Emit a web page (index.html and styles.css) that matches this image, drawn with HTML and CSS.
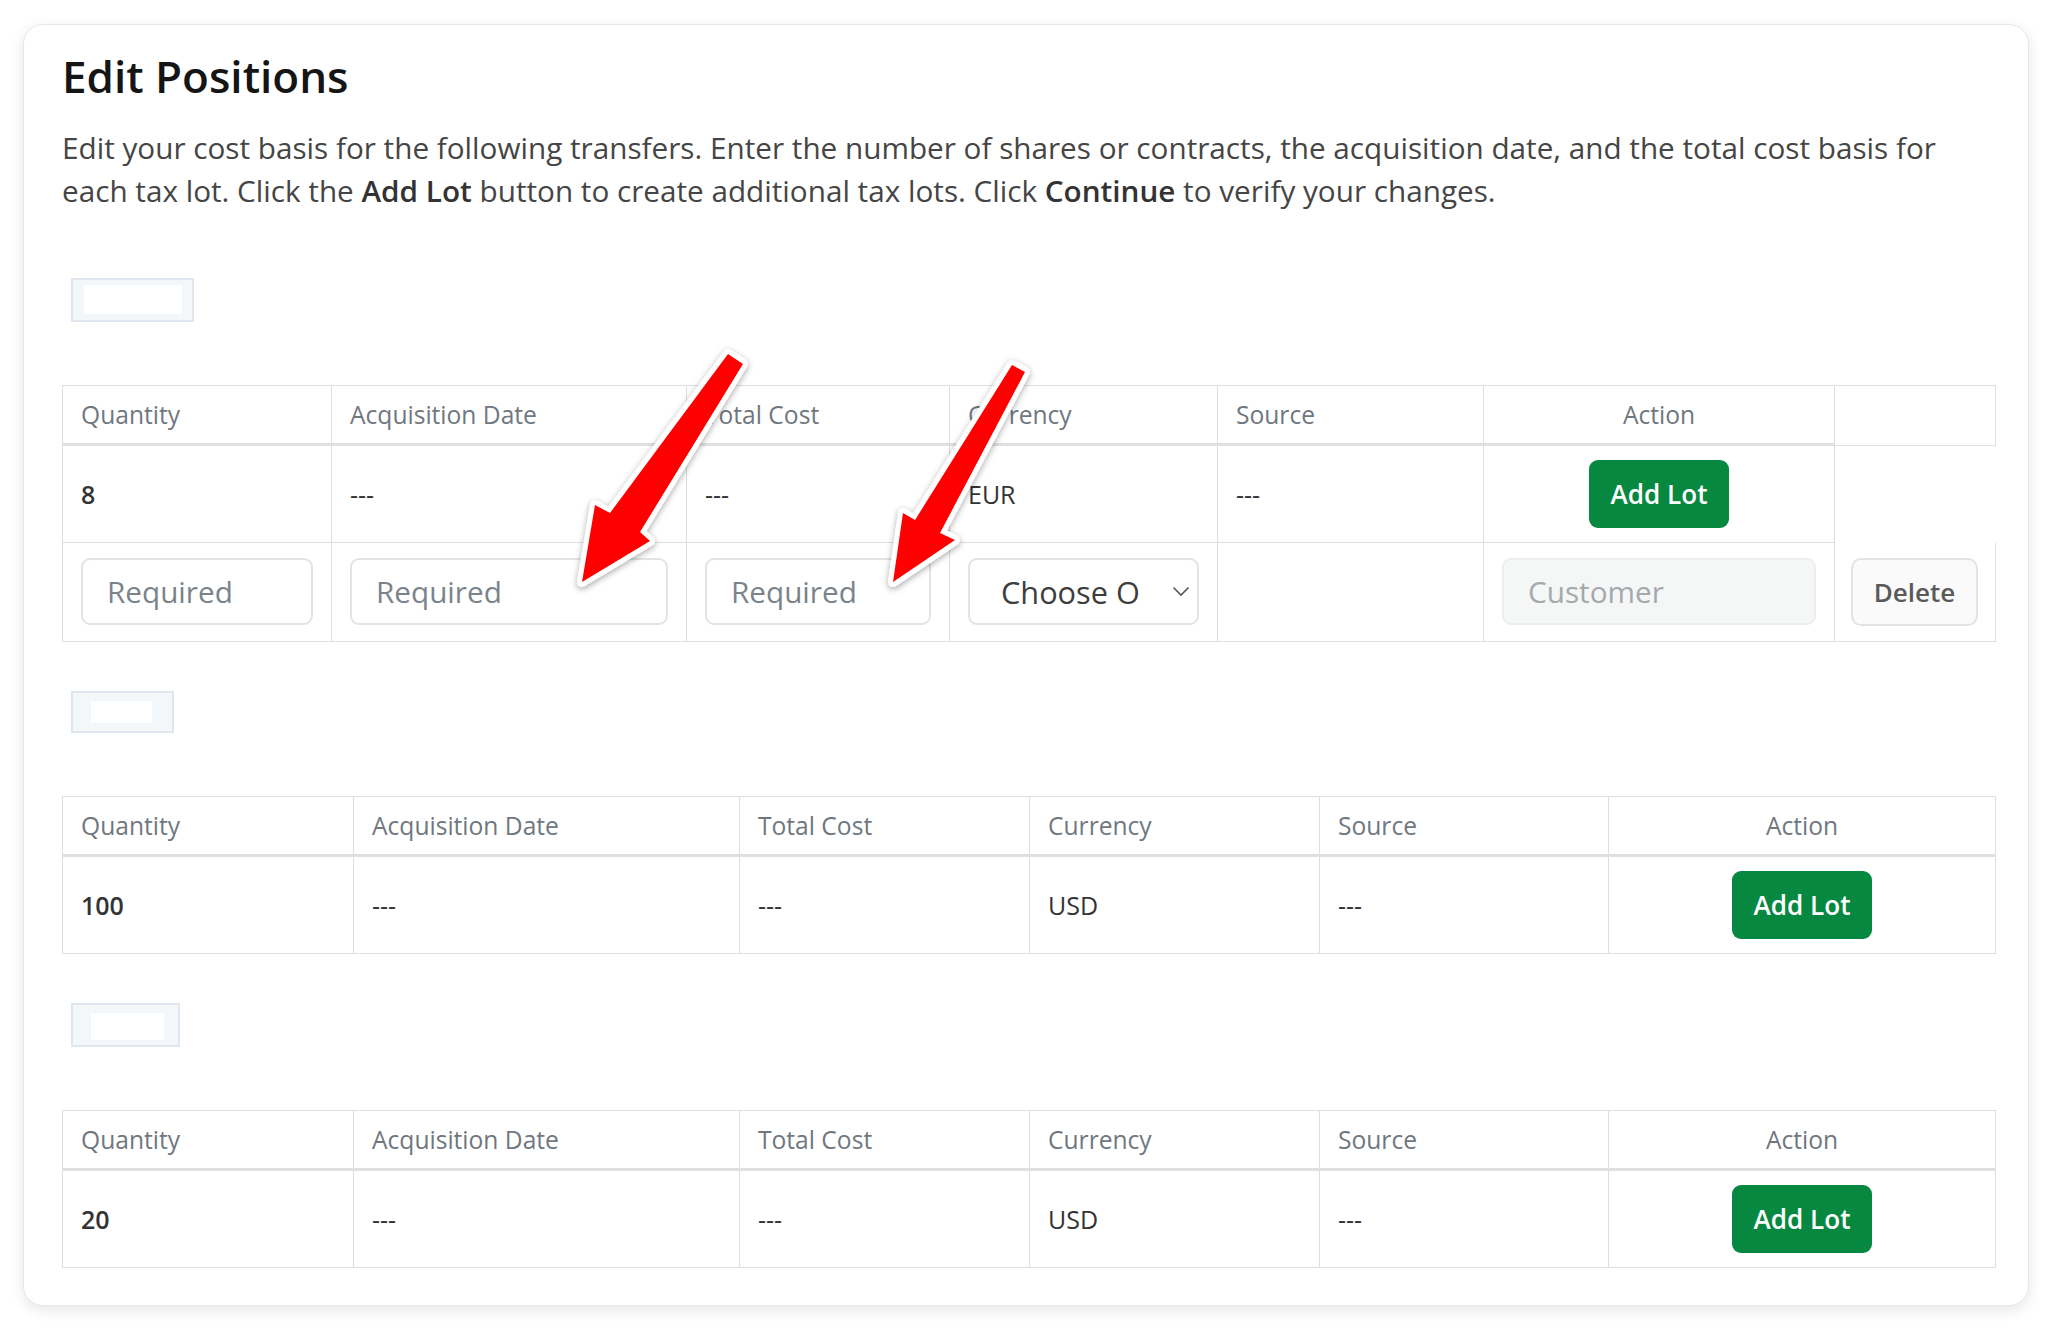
FILE: index.html
```html
<!DOCTYPE html>
<html lang="en">
<head>
<meta charset="utf-8">
<title>Edit Positions</title>
<link rel="stylesheet" href="styles.css">
</head>
<body>
<div class="page">
  <div class="card">
    <h1 class="title">Edit Positions</h1>
    <p class="intro">Edit your cost basis for the following transfers. Enter the number of shares or contracts, the acquisition date, and the total cost basis for each tax lot. Click the <b>Add Lot</b> button to create additional tax lots. Click <b>Continue</b> to verify your changes.</p>

    <section class="position position-first">
      <div class="logo logo-a"><span class="logo-inner"></span></div>
      <table class="lots lots-a">
        <colgroup>
          <col class="ca1"><col class="ca2"><col class="ca3"><col class="ca4"><col class="ca5"><col class="ca6"><col class="ca7">
        </colgroup>
        <thead>
          <tr>
            <th>Quantity</th>
            <th>Acquisition Date</th>
            <th>Total Cost</th>
            <th>Currency</th>
            <th>Source</th>
            <th class="action">Action</th>
            <th class="spacer" rowspan="2"></th>
          </tr>
        </thead>
        <tbody>
          <tr>
            <td class="num">8</td>
            <td>---</td>
            <td>---</td>
            <td>EUR</td>
            <td>---</td>
            <td class="action"><button class="btn-add" type="button">Add Lot</button></td>
          </tr>
          <tr class="edit-row">
            <td><input class="field" type="text" placeholder="Required"></td>
            <td><input class="field" type="text" placeholder="Required"></td>
            <td><input class="field" type="text" placeholder="Required"></td>
            <td>
              <div class="select"><span class="select-text">Choose One</span>
                <svg class="chev" width="18" height="11" viewBox="0 0 18 11"><path d="M1.5 1.5 L9 9 L16.5 1.5" fill="none" stroke="#555" stroke-width="1.6"/></svg>
              </div>
            </td>
            <td></td>
            <td><input class="field field-disabled" type="text" placeholder="Customer" disabled></td>
            <td class="del-cell"><button class="btn-delete" type="button">Delete</button></td>
          </tr>
        </tbody>
      </table>
    </section>

    <section class="position">
      <div class="logo logo-b"><span class="logo-inner"></span></div>
      <table class="lots lots-b">
        <colgroup>
          <col class="cb1"><col class="cb2"><col class="cb3"><col class="cb4"><col class="cb5"><col class="cb6">
        </colgroup>
        <thead>
          <tr>
            <th>Quantity</th>
            <th>Acquisition Date</th>
            <th>Total Cost</th>
            <th>Currency</th>
            <th>Source</th>
            <th class="action">Action</th>
          </tr>
        </thead>
        <tbody>
          <tr>
            <td class="num">100</td>
            <td>---</td>
            <td>---</td>
            <td>USD</td>
            <td>---</td>
            <td class="action"><button class="btn-add" type="button">Add Lot</button></td>
          </tr>
        </tbody>
      </table>
    </section>

    <section class="position">
      <div class="logo logo-c"><span class="logo-inner"></span></div>
      <table class="lots lots-b">
        <colgroup>
          <col class="cb1"><col class="cb2"><col class="cb3"><col class="cb4"><col class="cb5"><col class="cb6">
        </colgroup>
        <thead>
          <tr>
            <th>Quantity</th>
            <th>Acquisition Date</th>
            <th>Total Cost</th>
            <th>Currency</th>
            <th>Source</th>
            <th class="action">Action</th>
          </tr>
        </thead>
        <tbody>
          <tr>
            <td class="num">20</td>
            <td>---</td>
            <td>---</td>
            <td>USD</td>
            <td>---</td>
            <td class="action"><button class="btn-add" type="button">Add Lot</button></td>
          </tr>
        </tbody>
      </table>
    </section>
  </div>

  <svg class="arrows" width="2052" height="1330" viewBox="0 0 2052 1330">
    <defs>
      <filter id="shadow" x="-20%" y="-20%" width="140%" height="140%">
        <feDropShadow dx="0" dy="2" stdDeviation="3" flood-color="#000" flood-opacity="0.35"/>
      </filter>
    </defs>
    <g filter="url(#shadow)">
      <polygon points="728,354 743,364 640,532 650,541 582,582 595,505 610,513" fill="#ff0000" stroke="#fff" stroke-width="10" stroke-linejoin="round" paint-order="stroke"/>
      <polygon points="1012,365 1025,372 940,533 955,540 893,582 903,513 915,520" fill="#ff0000" stroke="#fff" stroke-width="10" stroke-linejoin="round" paint-order="stroke"/>
    </g>
  </svg>
</div>
</body>
</html>
```

FILE: styles.css
```css
* { box-sizing: border-box; }

html, body {
  margin: 0;
  background: #ffffff;
}

body {
  font-family: "Open Sans", Lato, sans-serif;
  color: #333333;
}

.page {
  position: relative;
  width: 2052px;
  height: 1330px;
  padding: 24px 0 0 23px;
}

.card {
  width: 2006px;
  height: 1282px;
  background: #ffffff;
  border: 1px solid #e8e8e8;
  border-radius: 20px;
  box-shadow: 0 4px 14px rgba(0, 0, 0, 0.10);
  padding: 25px 33px 0 38px;
}

.title {
  margin: 0;
  font-size: 44px;
  line-height: 1.2;
  font-weight: 600;
  color: #151515;
}

.intro {
  margin: 23px 0 0;
  font-size: 29.7px;
  line-height: 43px;
  color: #454545;
}

.intro b { font-weight: 600; color: #333; }

.position { margin-top: 49px; }
.position-first { margin-top: 66px; }

.logo {
  display: flex;
  width: fit-content;
  margin-left: 9px;
  border: 2px solid #dfe6ee;
  background: #f4f7fa;
}

.logo-inner { display: block; background: #ffffff; }

.logo-a { padding: 5px 10px 6px 11px; }
.logo-a .logo-inner { width: 98px; height: 29px; }
.logo-b { padding: 8px 20px 8px 18px; }
.logo-b .logo-inner { width: 61px; height: 22px; }
.logo-c { padding: 8px 14px 5px 18px; }
.logo-c .logo-inner { width: 73px; height: 27px; }

.lots {
  width: 1933px;
  margin-top: 63px;
  table-layout: fixed;
  border-collapse: separate;
  border-spacing: 0;
  border-top: 1px solid #dedede;
  border-left: 1px solid #dedede;
}

.ca1 { width: 269px; } .ca2 { width: 355px; } .ca3 { width: 263px; } .ca4 { width: 268px; }
.ca5 { width: 266px; } .ca6 { width: 351px; } .ca7 { width: 161px; }

.cb1 { width: 291px; } .cb2 { width: 386px; } .cb3 { width: 290px; } .cb4 { width: 290px; }
.cb5 { width: 289px; } .cb6 { width: 387px; }

.lots th,
.lots td {
  border-right: 1px solid #dedede;
  border-bottom: 1px solid #dedede;
  padding: 14px 18px;
  vertical-align: middle;
  text-align: left;
}

.lots th {
  font-weight: 400;
  font-size: 24.6px;
  line-height: 29px;
  color: #6f777f;
  border-bottom: 3px solid #e0e0e0;
}

.lots th.spacer { border-bottom-width: 1px; }

.lots td {
  font-size: 25px;
  line-height: 30px;
  color: #333333;
}

.lots .action { text-align: center; }

.lots td.num { font-weight: 600; }

.btn-add {
  display: inline-block;
  height: 68px;
  padding: 0 22px;
  border: 0;
  border-radius: 9px;
  background: #078841;
  color: #ffffff;
  font-family: inherit;
  font-size: 26.1px;
  font-weight: 600;
  line-height: 68px;
}

.edit-row td { padding: 15px 18px; }

.field {
  display: block;
  width: 100%;
  height: 67px;
  padding: 0 24px;
  border: 2px solid #e3e3e3;
  border-radius: 9px;
  background: #ffffff;
  font-family: inherit;
  font-size: 29.7px;
  color: #333333;
}

.field::placeholder { color: #7b838a; }

.field-disabled {
  background: #f5f6f6;
  border-color: #eceeee;
}

.field-disabled::placeholder { color: #a4a9ad; }

.select {
  display: flex;
  align-items: center;
  justify-content: space-between;
  height: 67px;
  padding: 0 7px 0 31px;
  border: 2px solid #e3e3e3;
  border-radius: 9px;
  background: #ffffff;
  font-size: 30.7px;
  color: #3d3d3d;
}

.select-text {
  width: 141px;
  overflow: hidden;
  white-space: nowrap;
}

.chev { display: block; }

.lots td.del-cell { padding: 15px 17px 15px 16px; }

.btn-delete {
  display: block;
  width: 100%;
  height: 68px;
  border: 2px solid #e3e3e3;
  border-radius: 10px;
  background: #fafafa;
  font-family: inherit;
  font-size: 26px;
  font-weight: 600;
  color: #5a5a5a;
}

.arrows {
  position: absolute;
  left: 0;
  top: 0;
  pointer-events: none;
}
```
